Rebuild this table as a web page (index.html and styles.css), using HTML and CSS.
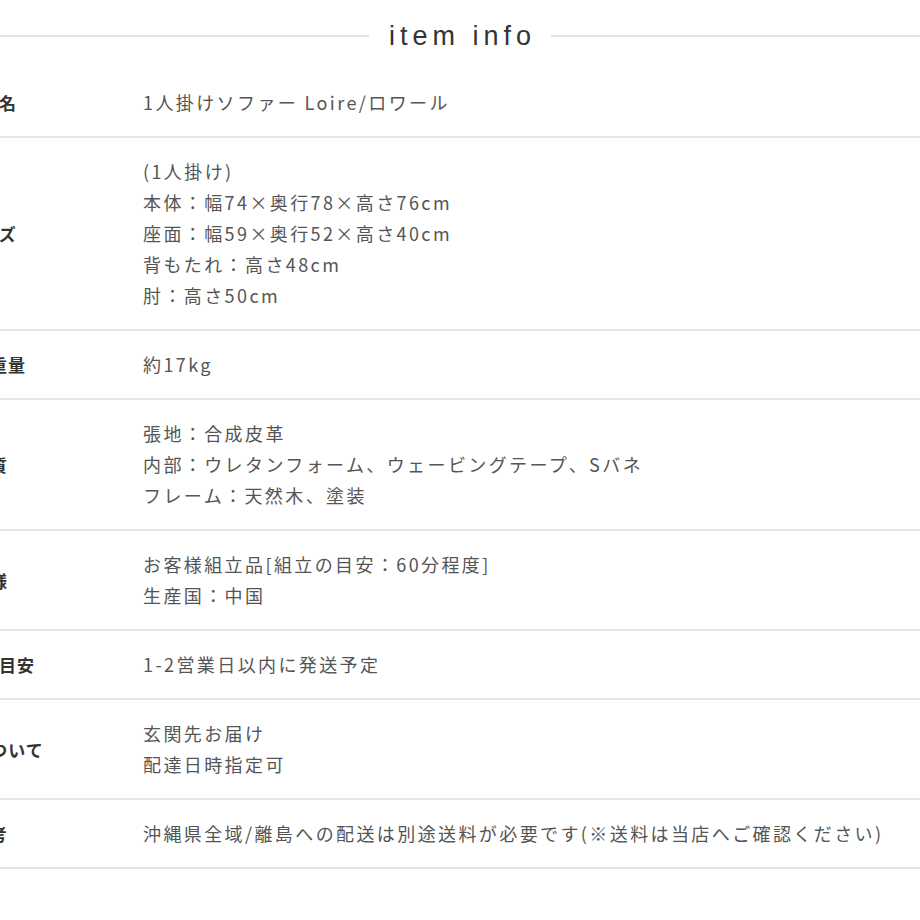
FILE: index.html
```html
<!DOCTYPE html>
<html lang="ja">
<head>
<meta charset="utf-8">
<title>item info</title>
<link rel="stylesheet" href="styles.css">
</head>
<body>
<div class="page">
  <h2 class="heading"><span class="heading-text">item info</span></h2>
  <div class="spec">
    <div class="row">
      <div class="label">商品名</div>
      <div class="value">1人掛けソファー Loire/ロワール</div>
    </div>
    <div class="row">
      <div class="label">サイズ</div>
      <div class="value">(1人掛け)<br>本体：幅74×奥行78×高さ76cm<br>座面：幅59×奥行52×高さ40cm<br>背もたれ：高さ48cm<br>肘：高さ50cm</div>
    </div>
    <div class="row">
      <div class="label">本体重量</div>
      <div class="value">約17kg</div>
    </div>
    <div class="row">
      <div class="label">材質</div>
      <div class="value">張地：合成皮革<br>内部：ウレタンフォーム、ウェービングテープ、Sバネ<br>フレーム：天然木、塗装</div>
    </div>
    <div class="row">
      <div class="label">仕様</div>
      <div class="value">お客様組立品[組立の目安：60分程度]<br>生産国：中国</div>
    </div>
    <div class="row">
      <div class="label">お届け目安</div>
      <div class="value">1-2営業日以内に発送予定</div>
    </div>
    <div class="row">
      <div class="label">配送について</div>
      <div class="value">玄関先お届け<br>配達日時指定可</div>
    </div>
    <div class="row">
      <div class="label">備考</div>
      <div class="value">沖縄県全域/離島への配送は別途送料が必要です(※送料は当店へご確認ください)</div>
    </div>
  </div>
</div>
</body>
</html>
```

FILE: styles.css
```css
html, body {
  margin: 0;
  padding: 0;
  background: #ffffff;
}

body {
  width: 920px;
  height: 920px;
  overflow: hidden;
}

.page {
  width: 920px;
}

.heading {
  display: flex;
  align-items: center;
  gap: 20px;
  margin: 0 0 15px 0;
  padding-top: 18px;
  height: 36px;
  font-family: "Liberation Sans", Arial, sans-serif;
  font-weight: normal;
  font-size: 27px;
  line-height: 36px;
  color: #333333;
}

.heading::before,
.heading::after {
  content: "";
  flex: 1;
  height: 2px;
  background: #e2e2e2;
}

.heading-text {
  letter-spacing: 5px;
  margin-right: -5px;
}

.spec {
  margin-left: -130px;
  width: 1100px;
  font-family: "Noto Sans CJK JP", "Noto Sans", sans-serif;
}

.row {
  display: grid;
  grid-template-columns: 240px 1fr;
  border-bottom: 2px solid #e6e6e6;
}

.label {
  display: flex;
  align-items: center;
  justify-content: center;
  font-size: 17px;
  font-weight: bold;
  color: #333333;
  letter-spacing: 1px;
}

.value {
  padding: 18px 0 18px 33px;
  font-size: 18px;
  line-height: 31px;
  letter-spacing: 2.4px;
  color: #555555;
}
```
